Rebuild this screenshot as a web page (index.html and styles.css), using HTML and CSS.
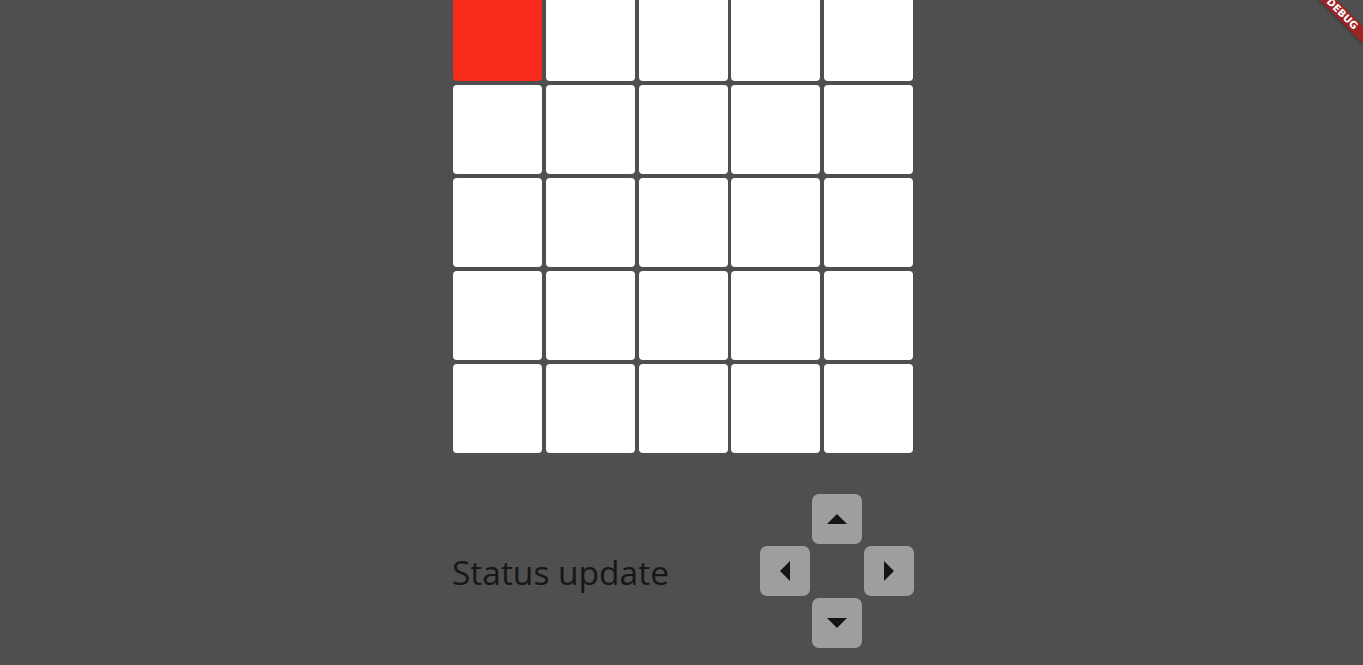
FILE: index.html
```html
<!DOCTYPE html>
<html>
<head>
<meta charset="utf-8">
<link rel="stylesheet" href="styles.css">
</head>
<body>
<div class="page">
  <div class="board">
    <div class="cell active"></div><div class="cell"></div><div class="cell"></div><div class="cell"></div><div class="cell"></div>
    <div class="cell"></div><div class="cell"></div><div class="cell"></div><div class="cell"></div><div class="cell"></div>
    <div class="cell"></div><div class="cell"></div><div class="cell"></div><div class="cell"></div><div class="cell"></div>
    <div class="cell"></div><div class="cell"></div><div class="cell"></div><div class="cell"></div><div class="cell"></div>
    <div class="cell"></div><div class="cell"></div><div class="cell"></div><div class="cell"></div><div class="cell"></div>
  </div>
  <div class="controls">
    <div class="status">Status update</div>
    <div class="dpad">
      <button class="btn up"><svg width="20" height="10" viewBox="0 0 20 10"><polygon points="0,10 10,0 20,10"/></svg></button>
      <button class="btn left"><svg width="10" height="20" viewBox="0 0 10 20"><polygon points="10,0 0,10 10,20"/></svg></button>
      <button class="btn right"><svg width="10" height="20" viewBox="0 0 10 20"><polygon points="0,0 10,10 0,20"/></svg></button>
      <button class="btn down"><svg width="20" height="10" viewBox="0 0 20 10"><polygon points="0,0 10,10 20,0"/></svg></button>
    </div>
  </div>
</div>
<div class="banner">DEBUG</div>
</body>
</html>
```
FILE: styles.css
```css
html, body {
  margin: 0;
  padding: 0;
  width: 1363px;
  height: 665px;
  overflow: hidden;
  background: #4f4f4f;
  font-family: "Open Sans", "Noto Sans", sans-serif;
}
.page {
  display: flex;
  flex-direction: column;
  align-items: center;
  padding-left: 3px;
  margin-top: -8px;
}
.board {
  display: grid;
  grid-template-columns: repeat(5, 89px);
  grid-auto-rows: 89px;
  column-gap: 3.75px;
  row-gap: 4px;
  width: 460px;
}
.cell {
  background: #ffffff;
  border-radius: 4px;
}
.cell.active {
  background: #f72a1c;
}
.controls {
  width: 462px;
  margin-top: 41px;
  display: flex;
  align-items: center;
  justify-content: space-between;
}
.status {
  font-size: 33.5px;
  color: #161616;
  padding-top: 2px;
}
.dpad {
  display: grid;
  grid-template-columns: repeat(3, 50px);
  grid-template-rows: repeat(3, 50px);
  gap: 2px;
}
.btn {
  border: none;
  padding: 0;
  margin: 0;
  background: #9e9e9e;
  border-radius: 7px;
  display: flex;
  align-items: center;
  justify-content: center;
}
.btn svg { fill: #141414; display: block; }
.btn.up { grid-column: 2; grid-row: 1; }
.btn.left { grid-column: 1; grid-row: 2; }
.btn.right { grid-column: 3; grid-row: 2; }
.btn.down { grid-column: 2; grid-row: 3; }
.banner {
  position: absolute;
  left: 1302px;
  top: 8px;
  width: 80px;
  height: 12px;
  transform: rotate(45deg);
  background: #9a2424;
  color: #fff;
  font-family: "DejaVu Sans", sans-serif;
  font-weight: bold;
  font-size: 10px;
  line-height: 12px;
  text-align: center;
  box-shadow: 0 1px 3px rgba(0,0,0,0.3);
}
```
